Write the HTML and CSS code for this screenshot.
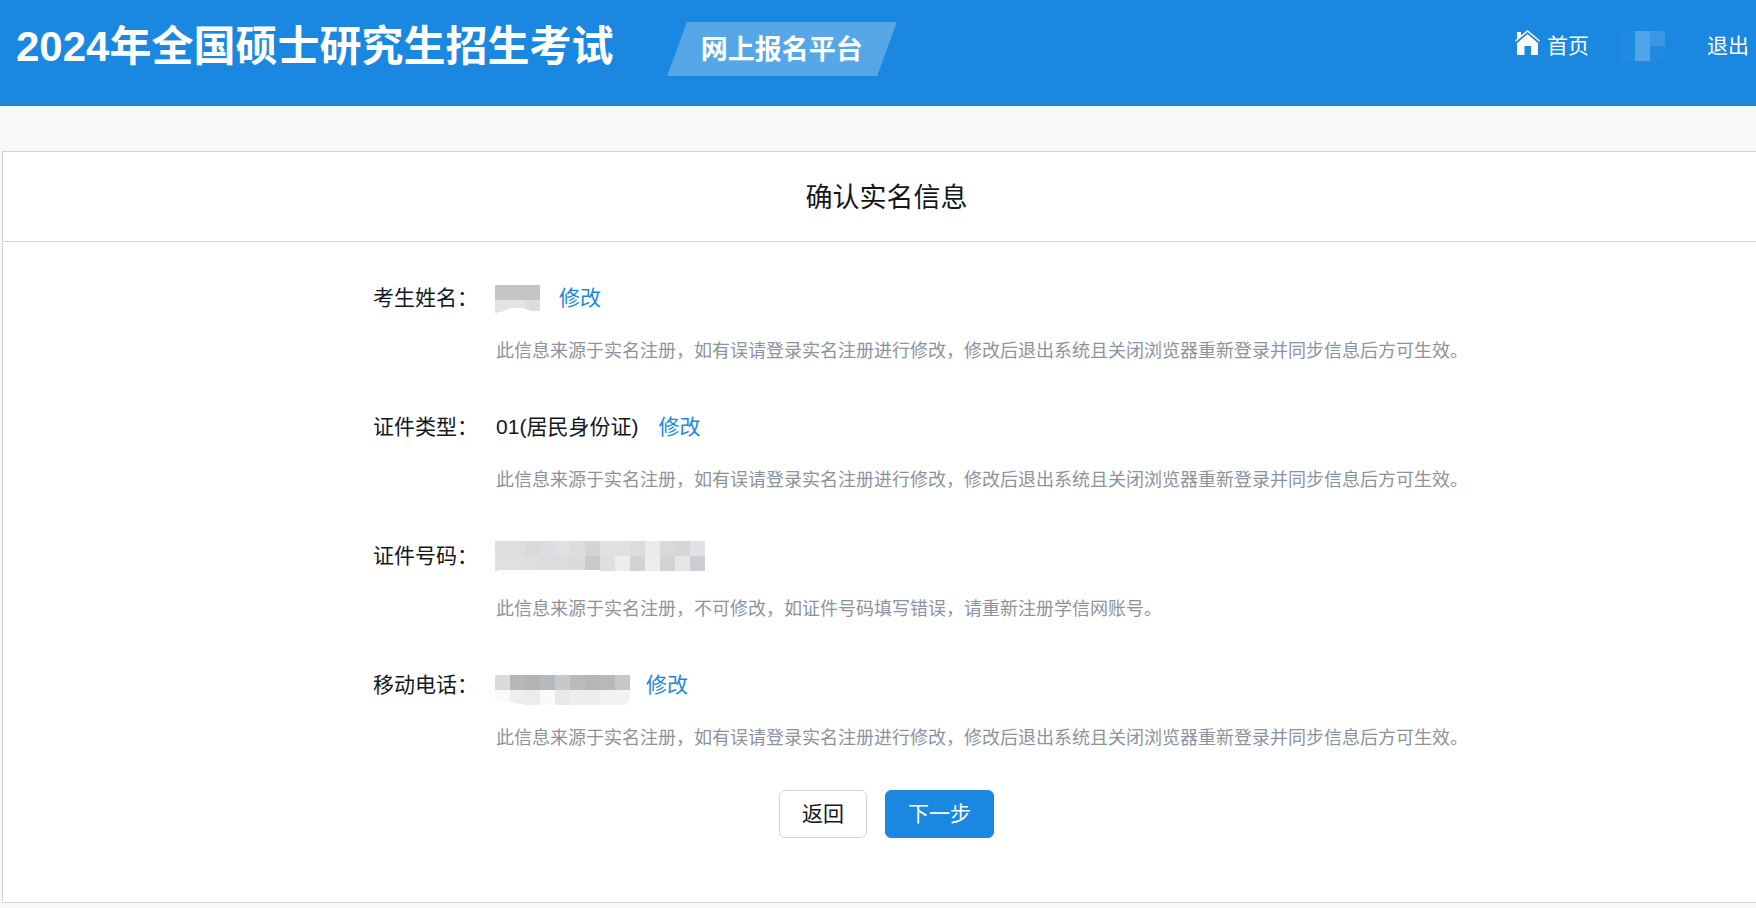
FILE: index.html
```
<!DOCTYPE html>
<html lang="zh-CN">
<head>
  <meta charset="UTF-8" />
  <meta name="viewport" content="width=device-width, initial-scale=1.0" />
  <title>确认实名信息</title>
  <link rel="stylesheet" href="styles.css">
</head>
<body>

<!-- Header -->
<header class="header">
  <h1 class="site-title">2024年全国硕士研究生招生考试</h1>
  <div class="platform"><span>网上报名平台</span></div>
  <nav class="user-nav">
    <a class="home-link" href="#">
      <svg class="home-icon" width="25" height="25" viewBox="0 0 25 25" aria-hidden="true">
        <path fill="#fff" d="M2 2h4v6H2zM12.500 4L23 13v12h-7v-9H9.500v9H2V13z"/>
        <path fill="none" stroke="#1a87e0" stroke-width="2" d="M.5 12.500L12.500 2.500l12 10"/>
        <path fill="none" stroke="#fff" stroke-width="1.500" d="M.5 11L12.500 1l12 10"/>
      </svg>首页</a>
    <svg class="user-name" width="45" height="30" viewBox="0 0 45 30" shape-rendering="crispEdges" aria-hidden="true">
      <path fill="#1f8be1" d="M0 5L10 0h5v30H0z"/>
      <path fill="#50a5ea" d="M15 0h15v30H15z"/>
      <path fill="#3998e6" d="M30 0h15v15H30z"/>
      <path fill="#208ae2" d="M30 15h15v15H30z"/>
    </svg>
    <a href="#">退出</a>
  </nav>
</header>

<!-- Real-name info -->
<main class="card">
  <h2 class="card-title">确认实名信息</h2>
  <div class="card-body">
    <dl class="info-list">
      <div class="info-item">
        <dt>考生姓名：</dt>
        <dd>
          <div class="value">
            <svg class="masked" width="43" height="30" viewBox="0 0 43 30" shape-rendering="crispEdges" aria-hidden="true">
              <path fill="#c4c6c5" d="M-1 2h30v15H-1z"/>
              <path fill="#c6c4c9" d="M29 2h15v15H29z"/>
              <path fill="#e4e4e4" d="M-1 17h30v9l-3-1H14l-9 4-6 1z"/>
              <path fill="#dddde0" d="M29 17h15v11h-9l-6-2z"/>
            </svg>
            <a href="#">修改</a>
          </div>
          <p class="hint">此信息来源于实名注册，如有误请登录实名注册进行修改，修改后退出系统且关闭浏览器重新登录并同步信息后方可生效。</p>
        </dd>
      </div>
      <div class="info-item">
        <dt>证件类型：</dt>
        <dd>
          <div class="value">
            <span>01(居民身份证)</span>
            <a href="#">修改</a>
          </div>
          <p class="hint">此信息来源于实名注册，如有误请登录实名注册进行修改，修改后退出系统且关闭浏览器重新登录并同步信息后方可生效。</p>
        </dd>
      </div>
      <div class="info-item">
        <dt>证件号码：</dt>
        <dd>
          <div class="value">
            <svg class="masked" width="209" height="30" viewBox="0 0 209 30" shape-rendering="crispEdges" aria-hidden="true">
              <path fill="#dddfde" d="M-1 0h30v15H-1z"/>
              <path fill="#d9d9d9" d="M29 0h15v15H29z"/>
              <path fill="#dcdde1" d="M44 0h15v15H44z"/>
              <path fill="#e0e1e3" d="M59 0h15v15H59z"/>
              <path fill="#dcdde0" d="M74 0h15v15H74z"/>
              <path fill="#d4d4d4" d="M89 0h15v15H89z"/>
              <path fill="#e0e1e5" d="M104 0h15v15h-15z"/>
              <path fill="#e1e0df" d="M119 0h15v15h-15z"/>
              <path fill="#dadcde" d="M134 0h15v15h-15z"/>
              <path fill="#e9eaeb" d="M149 0h15v15h-15z"/>
              <path fill="#d8d9da" d="M164 0h15v15h-15z"/>
              <path fill="#d6d6d6" d="M179 0h15v15h-15z"/>
              <path fill="#e0e1e5" d="M194 0h15v15h-15z"/>
              <path fill="#dfe0e0" d="M-1 15h30v14H2v1h-3z"/>
              <path fill="#dddee1" d="M29 15h15v14H29z"/>
              <path fill="#dcdcdd" d="M44 15h30v14H44z"/>
              <path fill="#dadcdb" d="M74 15h15v14H74z"/>
              <path fill="#c9c9c9" d="M89 15h15v14H89z"/>
              <path fill="#dddee1" d="M104 15h15v15h-15z"/>
              <path fill="#eeecec" d="M119 15h15v15h-15z"/>
              <path fill="#cfd3d7" d="M134 15h15v15h-15z"/>
              <path fill="#eeecea" d="M149 15h15v15h-15z"/>
              <path fill="#d3d3d4" d="M164 15h15v15h-15z"/>
              <path fill="#e4e5e8" d="M179 15h15v15h-15z"/>
              <path fill="#cdced3" d="M194 15h15v15h-15z"/>
            </svg>
          </div>
          <p class="hint">此信息来源于实名注册，不可修改，如证件号码填写错误，请重新注册学信网账号。</p>
        </dd>
      </div>
      <div class="info-item">
        <dt>移动电话：</dt>
        <dd>
          <div class="value">
            <svg class="masked" width="130" height="30" viewBox="0 0 130 30" shape-rendering="crispEdges" aria-hidden="true">
              <path fill="#dcdbdb" d="M-1 5h15v15H-1z"/>
              <path fill="#b5b7bb" d="M14 5h15v15H14z"/>
              <path fill="#b3b3b4" d="M29 5h15v15H29z"/>
              <path fill="#b5b8be" d="M44 5h15v15H44z"/>
              <path fill="#c7c8c9" d="M59 5h15v15H59z"/>
              <path fill="#bbbcba" d="M74 5h15v15H74z"/>
              <path fill="#b6b6b7" d="M89 5h15v15H89z"/>
              <path fill="#b7b9b7" d="M104 5h15v15h-15z"/>
              <path fill="#c4c7cb" d="M119 5h15v15h-15z"/>
              <path fill="#fafafa" d="M-1 20h15v12l-15-1z"/>
              <path fill="#eeeeeb" d="M14 20h15v15l-15-3z"/>
              <path fill="#ececed" d="M29 20h15v15H29z"/>
              <path fill="#f9fbfb" d="M44 20h15v15H44z"/>
              <path fill="#e9e9e9" d="M59 20h15v15H59z"/>
              <path fill="#ededed" d="M74 20h30v15H74z"/>
              <path fill="#f2f2f2" d="M104 20h30v11l-6 4h-24z"/>
            </svg>
            <a href="#">修改</a>
          </div>
          <p class="hint">此信息来源于实名注册，如有误请登录实名注册进行修改，修改后退出系统且关闭浏览器重新登录并同步信息后方可生效。</p>
        </dd>
      </div>
    </dl>
    <div class="actions">
      <button type="button" class="btn">返回</button>
      <button type="button" class="btn btn-primary">下一步</button>
    </div>
  </div>
</main>

</body>
</html>
```
FILE: styles.css
```
* {
  box-sizing: border-box;
}

body {
  margin: 0;
  background-color: #f7f8fa;
  color: #14171c;
  font-family: "Liberation Sans", "Noto Sans CJK SC", sans-serif;
  font-size: 21px;
  line-height: 30px;
  overflow-x: hidden;
}

h1, h2, dl, dd, p {
  margin: 0;
}

a {
  color: #1a87e0;
  text-decoration: none;
}

/* Header */
.header {
  display: flex;
  align-items: flex-start;
  height: 106px;
  padding: 22px 7px 0 16px;
  background-color: #1a87e0;
  color: #fff;
}

.site-title {
  font-size: 42px;
  line-height: 50px;
  white-space: nowrap;
}

.platform {
  width: 210px;
  height: 54px;
  margin-left: 64px;
  background-color: #56a6e8;
  font-size: 27px;
  font-weight: bold;
  line-height: 56px;
  text-align: center;
  white-space: nowrap;
  transform: skewX(-20deg);
}

.platform span {
  display: inline-block;
  transform: skewX(20deg);
}

.user-nav {
  display: flex;
  align-items: center;
  margin-left: auto;
  padding-top: 8px;
  white-space: nowrap;
}

.user-nav a {
  color: #fff;
  line-height: 32px;
}

.home-link {
  display: flex;
  gap: 7px;
}

.user-name {
  margin: 0 42px 0 31px;
}

/* Card, runs off the right edge of the window */
.card {
  margin: 45px -15px 7px 2px;
  border: 1px solid #d3d5d8;
  background-color: #fff;
}

.card-title {
  padding: 24px 0 20px;
  border-bottom: 1px solid #d3d5d8;
  font-size: 27px;
  font-weight: normal;
  line-height: 45px;
  text-align: center;
}

.card-body {
  padding: 41px 0 64px;
}

.info-item {
  display: flex;
  margin-bottom: 46px;
}

.info-item dt {
  width: 27%;
  padding-right: 2px;
  text-align: right;
}

.info-item dd {
  flex: 1;
  padding-left: 16px;
}

.value {
  display: flex;
  gap: 20px;
  height: 30px;
}

.masked {
  overflow: visible;
}

.hint {
  margin-top: 23px;
  color: #8c939d;
  font-size: 18px;
}

/* Buttons */
.actions {
  display: flex;
  justify-content: center;
  gap: 18px;
  margin-top: -9px;
}

.btn {
  height: 48px;
  padding: 0 22px;
  border: 1px solid #d3d5d8;
  border-radius: 6px;
  background-color: #fff;
  color: #14171c;
  font: inherit;
  cursor: pointer;
}

.btn-primary {
  border-color: #1a87e0;
  background-color: #1a87e0;
  color: #fff;
}
```
